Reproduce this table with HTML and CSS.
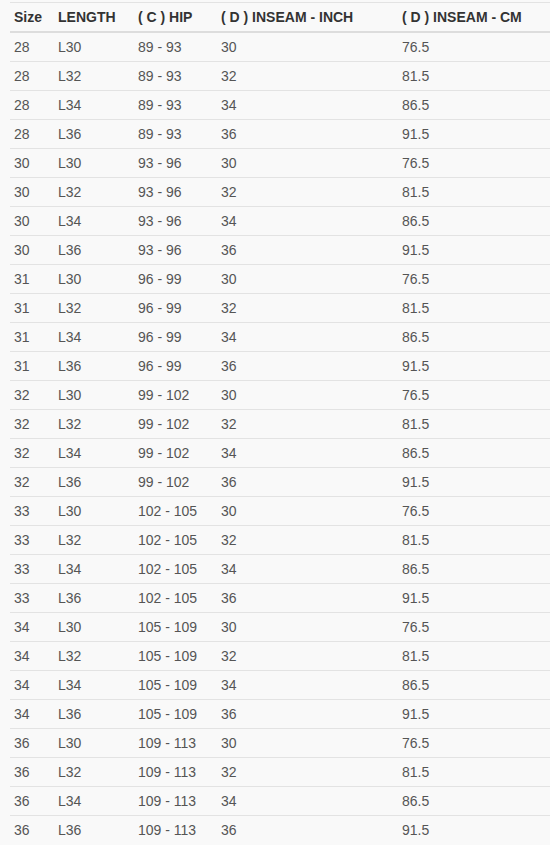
FILE: index.html
```html
<!DOCTYPE html>
<html>
<head>
<meta charset="utf-8">
<link rel="stylesheet" href="styles.css">
</head>
<body>
<div class="wrap">
<table class="size-table">
<colgroup>
<col class="c1"><col class="c2"><col class="c3"><col class="c4"><col class="c5">
</colgroup>
<thead>
<tr><th>Size</th><th>LENGTH</th><th>( C ) HIP</th><th>( D ) INSEAM - INCH</th><th>( D ) INSEAM - CM</th></tr>
</thead>
<tbody>
<tr><td>28</td><td>L30</td><td>89 - 93</td><td>30</td><td>76.5</td></tr>
<tr><td>28</td><td>L32</td><td>89 - 93</td><td>32</td><td>81.5</td></tr>
<tr><td>28</td><td>L34</td><td>89 - 93</td><td>34</td><td>86.5</td></tr>
<tr><td>28</td><td>L36</td><td>89 - 93</td><td>36</td><td>91.5</td></tr>
<tr><td>30</td><td>L30</td><td>93 - 96</td><td>30</td><td>76.5</td></tr>
<tr><td>30</td><td>L32</td><td>93 - 96</td><td>32</td><td>81.5</td></tr>
<tr><td>30</td><td>L34</td><td>93 - 96</td><td>34</td><td>86.5</td></tr>
<tr><td>30</td><td>L36</td><td>93 - 96</td><td>36</td><td>91.5</td></tr>
<tr><td>31</td><td>L30</td><td>96 - 99</td><td>30</td><td>76.5</td></tr>
<tr><td>31</td><td>L32</td><td>96 - 99</td><td>32</td><td>81.5</td></tr>
<tr><td>31</td><td>L34</td><td>96 - 99</td><td>34</td><td>86.5</td></tr>
<tr><td>31</td><td>L36</td><td>96 - 99</td><td>36</td><td>91.5</td></tr>
<tr><td>32</td><td>L30</td><td>99 - 102</td><td>30</td><td>76.5</td></tr>
<tr><td>32</td><td>L32</td><td>99 - 102</td><td>32</td><td>81.5</td></tr>
<tr><td>32</td><td>L34</td><td>99 - 102</td><td>34</td><td>86.5</td></tr>
<tr><td>32</td><td>L36</td><td>99 - 102</td><td>36</td><td>91.5</td></tr>
<tr><td>33</td><td>L30</td><td>102 - 105</td><td>30</td><td>76.5</td></tr>
<tr><td>33</td><td>L32</td><td>102 - 105</td><td>32</td><td>81.5</td></tr>
<tr><td>33</td><td>L34</td><td>102 - 105</td><td>34</td><td>86.5</td></tr>
<tr><td>33</td><td>L36</td><td>102 - 105</td><td>36</td><td>91.5</td></tr>
<tr><td>34</td><td>L30</td><td>105 - 109</td><td>30</td><td>76.5</td></tr>
<tr><td>34</td><td>L32</td><td>105 - 109</td><td>32</td><td>81.5</td></tr>
<tr><td>34</td><td>L34</td><td>105 - 109</td><td>34</td><td>86.5</td></tr>
<tr><td>34</td><td>L36</td><td>105 - 109</td><td>36</td><td>91.5</td></tr>
<tr><td>36</td><td>L30</td><td>109 - 113</td><td>30</td><td>76.5</td></tr>
<tr><td>36</td><td>L32</td><td>109 - 113</td><td>32</td><td>81.5</td></tr>
<tr><td>36</td><td>L34</td><td>109 - 113</td><td>34</td><td>86.5</td></tr>
<tr><td>36</td><td>L36</td><td>109 - 113</td><td>36</td><td>91.5</td></tr>
</tbody>
</table>
</div>
</body>
</html>
```

FILE: styles.css
```css
html, body {
  margin: 0;
  padding: 0;
  background: #f9f9f9;
}
.wrap {
  padding: 2px 0 0 10px;
}
.size-table {
  border-collapse: collapse;
  width: 540px;
  table-layout: fixed;
  font-family: "Liberation Sans", Arial, sans-serif;
  font-size: 14px;
  line-height: 20px;
  color: #555;
  border-top: 1px solid #e3e3e3;
}
.c1 { width: 44px; }
.c2 { width: 80px; }
.c3 { width: 83px; }
.c4 { width: 181px; }
.c5 { width: 152px; }
.size-table th {
  text-align: left;
  font-weight: bold;
  color: #333;
  padding: 4px;
  height: 20px;
  border-bottom: 2px solid #ddd;
  white-space: nowrap;
}
.size-table td {
  padding: 4px;
  border-top: 1px solid #e3e3e3;
  white-space: nowrap;
  height: 20px;
}
```
